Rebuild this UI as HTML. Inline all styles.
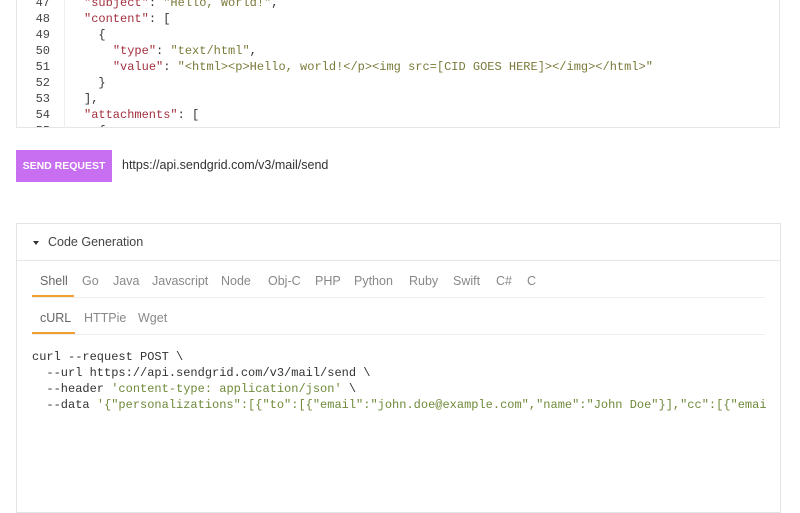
<!DOCTYPE html>
<html><head><style>
body{margin:0;width:800px;height:500px;background:#fff;position:relative;overflow:hidden;font-family:"Liberation Sans",sans-serif}
.a{position:absolute;white-space:pre}
.m{font-family:"Liberation Mono",monospace;font-size:12px;line-height:16px}
.k{color:#a3313f}.s{color:#7b7a3b}.p{color:#333}.g{color:#6f8a3a}
.n{color:#444;text-align:right;width:34px;left:16px}
.t{font-size:12.5px;color:#888;top:274px}
.c{font-size:12.5px;color:#888;top:311px}
</style></head><body>
<div class="a" style="left:16px;top:0;width:764px;height:128px;overflow:hidden;white-space:normal"><div class="a m n" style="left:0;top:-5px">47
48
49
50
51
52
53
54
55</div><div class="a m p" style="left:68px;top:-5px"><span class="k">"subject"</span>: <span class="s">"Hello, World!"</span>,
<span class="k">"content"</span>: [
  {
    <span class="k">"type"</span>: <span class="s">"text/html"</span>,
    <span class="k">"value"</span>: <span class="s">"&lt;html&gt;&lt;p&gt;Hello, world!&lt;/p&gt;&lt;img src=[CID GOES HERE]&gt;&lt;/img&gt;&lt;/html&gt;"</span>
  }
],
<span class="k">"attachments"</span>: [
  {</div></div>
<div class="a" style="left:16px;top:-10px;width:764px;height:138px;border:1px solid #e6e6e6;border-top:none;box-sizing:border-box"></div>
<div class="a" style="left:64px;top:0;width:1px;height:128px;background:#eee"></div>
<div class="a" style="left:16px;top:150px;width:96px;height:32px;background:#c86ef0;color:#fff;font-size:10.5px;font-weight:bold;line-height:32px;text-align:center">SEND REQUEST</div>
<div class="a" style="left:122px;top:158px;font-size:12.5px;color:#333">https://api.sendgrid.com/v3/mail/send</div>

<div class="a" style="left:16px;top:223px;width:765px;height:290px;border:1px solid #e3e3e3;box-sizing:border-box"></div>
<div class="a" style="left:17px;top:260px;width:763px;height:1px;background:#e6e6e6"></div>
<div class="a" style="left:33px;top:241px;width:0;height:0;border-left:3.5px solid transparent;border-right:3.5px solid transparent;border-top:4px solid #333"></div>
<div class="a" style="left:48px;top:235px;font-size:12.5px;color:#444">Code Generation</div>

<div class="a t" style="left:40px;color:#666">Shell</div>
<div class="a t" style="left:82px">Go</div>
<div class="a t" style="left:113px">Java</div>
<div class="a t" style="left:152px">Javascript</div>
<div class="a t" style="left:221px">Node</div>
<div class="a t" style="left:268px">Obj-C</div>
<div class="a t" style="left:315px">PHP</div>
<div class="a t" style="left:354px">Python</div>
<div class="a t" style="left:409px">Ruby</div>
<div class="a t" style="left:453px">Swift</div>
<div class="a t" style="left:496px">C#</div>
<div class="a t" style="left:527px">C</div>
<div class="a" style="left:32px;top:297px;width:733px;height:1px;background:#eee"></div>
<div class="a" style="left:32px;top:295px;width:42px;height:2px;background:#f0a030"></div>

<div class="a c" style="left:40px;color:#666">cURL</div>
<div class="a c" style="left:84px">HTTPie</div>
<div class="a c" style="left:138px">Wget</div>
<div class="a" style="left:32px;top:334px;width:733px;height:1px;background:#eee"></div>
<div class="a" style="left:32px;top:332px;width:43px;height:2px;background:#f0a030"></div>

<div class="a" style="left:32px;top:349px;width:734px;height:70px;overflow:hidden;white-space:normal"><div class="m p" style="white-space:pre">curl --request POST \
  --url https://api.sendgrid.com/v3/mail/send \
  --header <span class="g">'content-type: application/json'</span> \
  --data <span class="g">'{"personalizations":[{"to":[{"email":"john.doe@example.com","name":"John Doe"}],"cc":[{"email":"</span></div></div>
</body></html>
